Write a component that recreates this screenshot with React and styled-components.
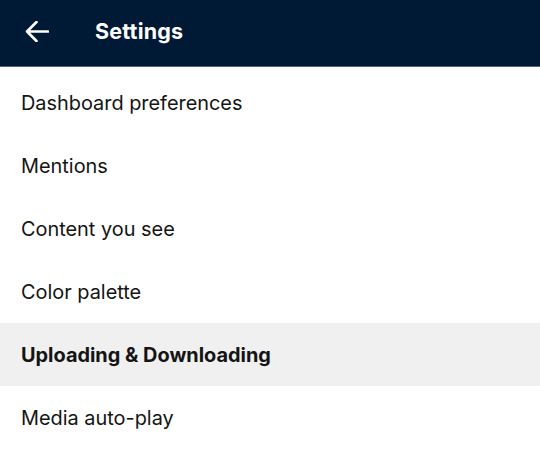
import React from "react";
import styled, { createGlobalStyle } from "styled-components";

const Global = createGlobalStyle`
  html, body { margin: 0; padding: 0; background: #ffffff; }
  body { font-family: "Inter", "Noto Sans", sans-serif; }
`;

const Page = styled.div`
  width: 540px;
  display: flex;
  flex-direction: column;
`;

const Header = styled.header`
  height: 62px;
  padding: 0 0 4px 24px;
  background: #001935;
  border-bottom: 1px solid #56657a;
  display: flex;
  align-items: center;
  gap: 46px;
  box-sizing: content-box;
`;

const BackButton = styled.button`
  background: none;
  border: none;
  padding: 0;
  width: 25px;
  height: 24px;
  display: flex;
  align-items: center;
  justify-content: center;
  color: #ffffff;
  cursor: pointer;
`;

const Title = styled.h1`
  margin: 0;
  color: #ffffff;
  font-size: 21.5px;
  font-weight: 700;
  letter-spacing: 0.2px;
`;

const List = styled.ul`
  list-style: none;
  margin: 0;
  padding: 4px 0 0;
`;

const Item = styled.li`
  height: 63px;
  display: flex;
  align-items: center;
  padding-left: 21px;
  background: ${(p) => (p.$active ? "#f0f0f0" : "#ffffff")};
  color: #141414;
  font-size: 19.9px;
  font-weight: ${(p) => (p.$active ? 700 : 400)};
`;

const items = [
  "Dashboard preferences",
  "Mentions",
  "Content you see",
  "Color palette",
  "Uploading & Downloading",
  "Media auto-play",
];

export default function App() {
  return (
    <Page>
      <Global />
      <Header>
        <BackButton aria-label="Back">
          <svg width="24" height="21" viewBox="0 0 24 21" fill="none">
            <path d="M2 10.5H23M11.5 1L2 10.5L11.5 20" stroke="#fff" strokeWidth="2.6" strokeLinecap="round" strokeLinejoin="round" />
          </svg>
        </BackButton>
        <Title>Settings</Title>
      </Header>
      <List>
        {items.map((t, i) => (
          <Item key={t} $active={i === 4}>{t}</Item>
        ))}
      </List>
    </Page>
  );
}
